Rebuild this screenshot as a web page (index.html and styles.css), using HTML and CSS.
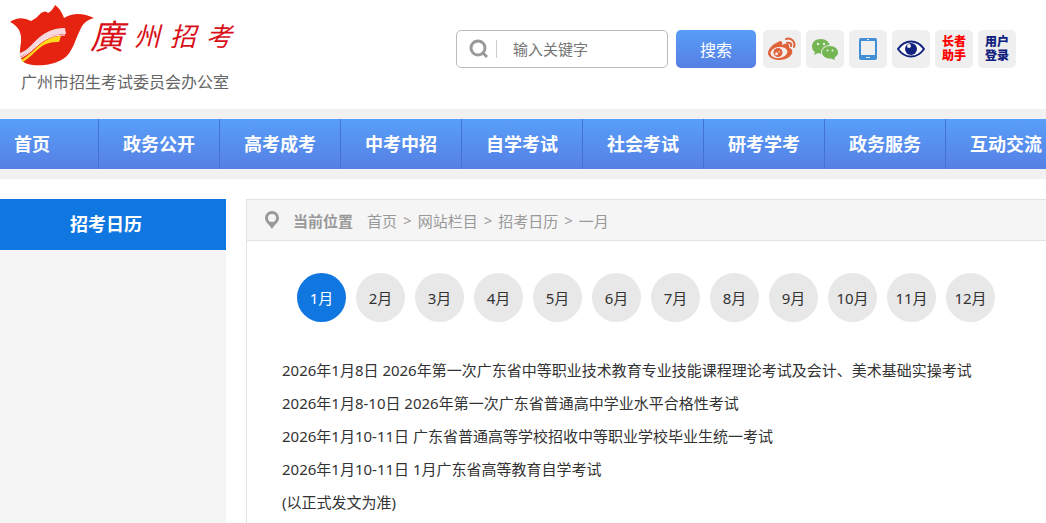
FILE: index.html
```html
<!DOCTYPE html>
<html lang="zh-CN">
<head>
    <meta charset="UTF-8">
    <meta name="viewport" content="width=device-width, initial-scale=1.0">
    <title>招考日历 - 广州市招生考试委员会办公室</title>
    <link rel="stylesheet" href="styles.css">
</head>
<body>
    <header class="header">
        <a class="logo" href="#">
            <span class="logo-top">
                <svg class="logo-mark" viewBox="0 0 84 62" aria-hidden="true">
                    <path fill="#e62310" d="M0 17Q10 10 21 16Q27 13 31 8Q36 5 38 8Q43 5 45 0Q51 4 54 13Q67 5 84 13Q76 15 72 21C65 34 63 48 53 54C42 61 24 62 15 58C8 54 10 44 11 37C12 27 8 21 0 17Z"/>
                    <path fill="#f8d8df" d="M9 48C23 46 27 23 55 23L56 29C31 29 27 46 10 52Z"/>
                    <path fill="#ffd91f" d="M11 55C27 46 31 32 51 31L49 37C30 36 26 49 13 57Z"/>
                    <path fill="none" stroke="#fff" d="M10 53C27 46 29 30 55 30"/>
                </svg>
                <span class="logo-script"><span class="logo-first">廣</span><span>州</span><span>招</span><span>考</span></span>
            </span>
            <span class="logo-name">广州市招生考试委员会办公室</span>
        </a>
        <form class="search">
            <div class="search-box">
                <svg class="search-icon" viewBox="0 0 20 20" aria-hidden="true">
                    <circle cx="9" cy="9" r="7" fill="none" stroke="#999" stroke-width="3"/>
                    <path d="M14 14l4 4" stroke="#999" stroke-width="3"/>
                </svg>
                <input class="search-input" type="text" placeholder="输入关键字" aria-label="输入关键字">
            </div>
            <button class="search-btn" type="submit">搜索</button>
        </form>
        <div class="tools">
            <a class="tool" href="#" aria-label="微博">
                <svg viewBox="0 0 28 24" aria-hidden="true">
                    <path fill="#e0623a" d="M10 5C13 3 15 4 14 8C18 6 22 6 21 10C21 11 23 11 24 13C26 18 19 23 11 23C5 23 0 20 0 16C0 12 5 7 10 5Z"/>
                    <ellipse cx="11" cy="15.500" rx="8.500" ry="5.500" fill="#f3eeeb" transform="rotate(-8 11 15.500)"/>
                    <circle cx="10" cy="15.500" r="4.500" fill="#e0623a"/>
                    <circle cx="8.500" cy="16.800" r="1.500" fill="#f3eeeb"/>
                    <circle cx="11.200" cy="14.800" r=".8" fill="#f3eeeb"/>
                    <path fill="none" stroke="#e0623a" stroke-width="2" stroke-linecap="round" d="M18 2C23 0 28 5 26 10M19 6C22 5 24 7 23 9"/>
                </svg>
            </a>
            <a class="tool" href="#" aria-label="微信">
                <svg viewBox="0 0 28 24" aria-hidden="true">
                    <path fill="#74b652" d="M10 2C4 2 1 5 1 9.500C1 12 2 14 4 15L3 18L7 16L11 17L19 9C18 5 15 2 10 2Z"/>
                    <ellipse cx="19" cy="15.500" rx="9" ry="7.500" fill="#efefef"/>
                    <path fill="#74b652" d="M19 9C14 9 11 12 11 15.500C11 19 15 22 20 21.500L24 23L23.500 20.500C26 19 27 17.500 27 15.500C27 12 24 9 19 9Z"/>
                    <g fill="#efefef"><circle cx="7" cy="7" r="1.200"/><circle cx="13" cy="7" r="1.200"/><circle cx="16.500" cy="13.500" r="1"/><circle cx="21.500" cy="13.500" r="1"/></g>
                </svg>
            </a>
            <a class="tool" href="#" aria-label="手机版">
                <svg viewBox="0 0 28 24" aria-hidden="true">
                    <rect x="5" y="1" width="18" height="22" rx="2" fill="#438fd5"/>
                    <path fill="#efefef" d="M7 4h14v14H7zM12 20h4v1h-4zM13 2h2v1h-2z"/>
                </svg>
            </a>
            <a class="tool" href="#" aria-label="无障碍">
                <svg viewBox="0 0 28 24" aria-hidden="true">
                    <path fill="#fff" stroke="#12227f" stroke-width="2" d="M1 12C8 2 20 2 27 12C20 22 8 22 1 12Z"/>
                    <circle cx="14" cy="12" r="6" fill="#12227f"/>
                    <circle cx="12" cy="9" r="2" fill="#efefef"/>
                </svg>
            </a>
            <a class="tool tool-elder" href="#">长者<br>助手</a>
            <a class="tool tool-login" href="#">用户<br>登录</a>
        </div>
    </header>

    <nav class="main-nav">
        <ul>
            <li><a href="#">首页</a></li>
            <li><a href="#">政务公开</a></li>
            <li><a href="#">高考成考</a></li>
            <li><a href="#">中考中招</a></li>
            <li><a href="#">自学考试</a></li>
            <li><a href="#">社会考试</a></li>
            <li><a href="#">研考学考</a></li>
            <li><a href="#">政务服务</a></li>
            <li><a href="#">互动交流</a></li>
        </ul>
    </nav>

    <div class="container">
        <aside class="sidebar">
            <h2>招考日历</h2>
        </aside>
        <main class="content">
            <div class="breadcrumb">
                <svg class="pin" viewBox="0 0 14 18" aria-hidden="true">
                    <path fill="#999" fill-rule="evenodd" d="M7 0a7 7 0 0 1 7 7c0 4-4 6-7 11C4 13 0 11 0 7a7 7 0 0 1 7-7zm0 3a4 4 0 1 0 0 8 4 4 0 0 0 0-8z"/>
                </svg>
                <strong>当前位置</strong>
                <a href="#">首页</a><span>&gt;</span><a href="#">网站栏目</a><span>&gt;</span><a href="#">招考日历</a><span>&gt;</span><a href="#">一月</a>
            </div>
            <div class="months">
                <button class="month active" type="button">1月</button>
                <button class="month" type="button">2月</button>
                <button class="month" type="button">3月</button>
                <button class="month" type="button">4月</button>
                <button class="month" type="button">5月</button>
                <button class="month" type="button">6月</button>
                <button class="month" type="button">7月</button>
                <button class="month" type="button">8月</button>
                <button class="month" type="button">9月</button>
                <button class="month" type="button">10月</button>
                <button class="month" type="button">11月</button>
                <button class="month" type="button">12月</button>
            </div>
            <div class="events">
                <p>2026年1月8日 2026年第一次广东省中等职业技术教育专业技能课程理论考试及会计、美术基础实操考试</p>
                <p>2026年1月8-10日 2026年第一次广东省普通高中学业水平合格性考试</p>
                <p>2026年1月10-11日 广东省普通高等学校招收中等职业学校毕业生统一考试</p>
                <p>2026年1月10-11日 1月广东省高等教育自学考试</p>
                <p>(以正式发文为准)</p>
            </div>
        </main>
    </div>
</body>
</html>
```
FILE: styles.css
```css
* {
    margin: 0;
    padding: 0;
    box-sizing: border-box;
    font-family: "Noto Sans", "Noto Sans CJK SC", sans-serif;
}

body {
    display: flex;
    flex-direction: column;
    min-height: 100vh;
    background-color: #fff;
    color: #333;
    font-size: 15px;
    overflow-x: hidden;
}

a {
    color: inherit;
    text-decoration: none;
}

.header {
    display: flex;
    align-items: flex-start;
    padding: 4px 30px 12px 10px;
}

.logo {
    display: flex;
    flex-direction: column;
}

.logo-top {
    display: flex;
    align-items: center;
    height: 64px;
}

.logo-mark {
    width: 84px;
    height: 62px;
}

.logo-script {
    display: flex;
    align-items: center;
    gap: 10px;
    margin-left: -4px;
    color: #d80f18;
    font-size: 26px;
    font-style: italic;
    line-height: 60px;
}

.logo-first {
    font-size: 34px;
}

.logo-name {
    padding-left: 11px;
    color: #666;
    font-size: 16px;
    line-height: 29px;
    white-space: nowrap;
}

.search {
    display: flex;
    gap: 8px;
    margin-top: 26px;
    margin-left: auto;
}

.search-box {
    display: flex;
    align-items: center;
    width: 212px;
    height: 38px;
    padding: 0 12px;
    border: 1px solid #bbb;
    border-radius: 5px;
}

.search-icon {
    flex: none;
    width: 20px;
    height: 20px;
}

.search-input {
    width: 100%;
    min-width: 0;
    height: 18px;
    margin-left: 7px;
    padding-left: 16px;
    border: 0;
    border-left: 1px solid #ccc;
    outline: 0;
    color: #333;
    font-size: 15px;
}

.search-input::placeholder {
    color: #757575;
}

.search-btn {
    width: 80px;
    height: 38px;
    border: 0;
    border-radius: 5px;
    background: linear-gradient(#589df8, #567fe4);
    color: #fff;
    font-size: 16px;
    cursor: pointer;
}

.tools {
    display: flex;
    gap: 5px;
    margin-top: 26px;
    margin-left: 7px;
}

.tool {
    display: flex;
    align-items: center;
    justify-content: center;
    width: 38px;
    height: 38px;
    border-radius: 5px;
    background: #efefef;
    font-size: 12px;
    font-weight: 900;
    line-height: 14px;
}

.tool svg {
    width: 28px;
    height: 24px;
}

.tool-elder {
    color: #f00;
}

.tool-login {
    color: #12227f;
}

.main-nav {
    padding: 10px 0;
    background: #f1f1f1;
    overflow: hidden;
}

.main-nav ul {
    display: flex;
    height: 50px;
    background: linear-gradient(#589ff9, #567fe4);
    list-style: none;
}

.main-nav li {
    flex: 0 0 121px;
    border-right: 1px solid #4473ce;
    text-align: center;
}

.main-nav li:first-child {
    flex-basis: 99px;
    padding-left: 14px;
    text-align: left;
}

.main-nav a {
    display: block;
    color: #fff;
    font-size: 18px;
    font-weight: 700;
    line-height: 50px;
}

.container {
    display: flex;
    flex: 1;
    gap: 20px;
    padding-top: 20px;
}

.sidebar {
    flex: 0 0 226px;
    background: #f5f5f5;
}

.sidebar h2 {
    padding-right: 14px;
    background: #1077e1;
    color: #fff;
    font-size: 18px;
    line-height: 51px;
    text-align: center;
}

.content {
    flex: 1;
    min-width: 0;
    border-left: 1px solid #e3e3e3;
}

.breadcrumb {
    display: flex;
    align-items: center;
    height: 42px;
    padding-left: 18px;
    border-top: 1px solid #e3e3e3;
    border-bottom: 1px solid #e3e3e3;
    background: #f5f5f5;
    color: #999;
}

.pin {
    width: 14px;
    height: 18px;
}

.breadcrumb strong {
    margin: 0 14px;
}

.breadcrumb span {
    margin: 0 6px;
    font-size: 15px;
}

.months {
    display: flex;
    flex-wrap: wrap;
    gap: 10px;
    padding: 32px 0 0 50px;
}

.month {
    width: 49px;
    height: 49px;
    border: 0;
    border-radius: 50%;
    background: #e8e8e8;
    color: #333;
    font-size: 15px;
    cursor: pointer;
}

.month.active {
    background: #1077e1;
    color: #fff;
}

.events {
    padding: 32px 35px 0;
    line-height: 33px;
}
```
